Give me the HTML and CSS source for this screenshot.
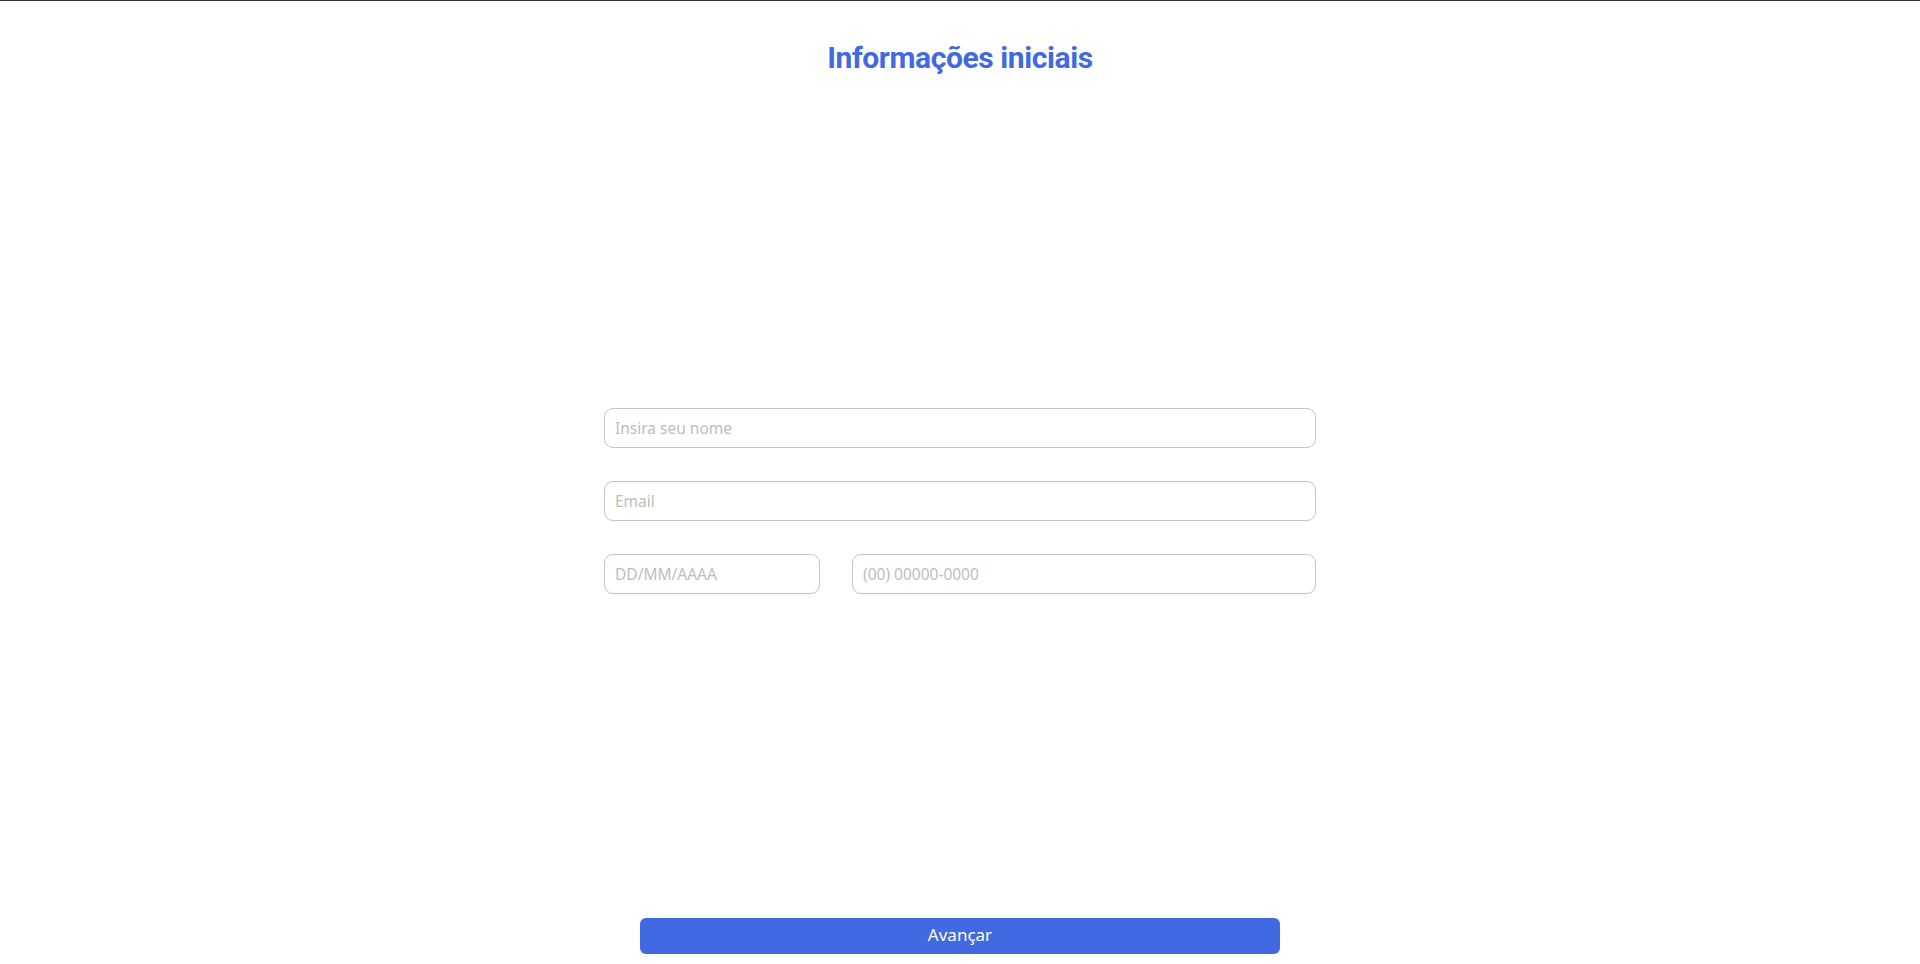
FILE: index.html
```html
<!DOCTYPE html>
<html lang="pt-BR">
<head>
<meta charset="utf-8">
<title>Informações iniciais</title>
<link rel="stylesheet" href="styles.css">
</head>
<body>
<div class="page">
  <h1 class="title">Informações iniciais</h1>
  <form class="form">
    <input class="field" type="text" placeholder="Insira seu nome">
    <input class="field" type="email" placeholder="Email">
    <div class="row">
      <input class="field field-date" type="text" placeholder="DD/MM/AAAA">
      <input class="field field-phone" type="text" placeholder="(00) 00000-0000">
    </div>
  </form>
  <div class="footer">
    <button class="btn" type="button">Avançar</button>
  </div>
</div>
</body>
</html>
```

FILE: styles.css
```css
* { box-sizing: border-box; }
html, body { margin: 0; padding: 0; }
body {
  background: #fff;
  font-family: "Noto Sans", "Open Sans", sans-serif;
  border-top: 1px solid #333;
}
.page {
  height: 963px;
  display: flex;
  flex-direction: column;
  align-items: center;
}
.title {
  margin: 39px 0 0;
  font-family: Roboto, "Liberation Sans", sans-serif;
  font-weight: 700;
  font-size: 30px;
  line-height: 36px;
  color: #4169e1;
  letter-spacing: -0.4px;
}
.form {
  margin-top: 332px;
  width: 712px;
  display: flex;
  flex-direction: column;
  gap: 33px;
}
.field {
  display: block;
  width: 100%;
  height: 40px;
  border: 1px solid #c4c4c4;
  border-radius: 9px;
  padding: 0 10px;
  font-family: inherit;
  font-size: 15.5px;
  color: #333;
  background: #fff;
  outline: none;
}
.field::placeholder { color: #bdbdbd; }
.row {
  display: flex;
  gap: 32px;
}
.field-date { width: 216px; flex: none; }
.field-phone { flex: 1; }
.footer {
  margin-top: auto;
  padding-bottom: 10px;
}
.btn {
  display: block;
  width: 640px;
  height: 36px;
  border: none;
  border-radius: 6px;
  background: #4169e1;
  color: #fff;
  font-family: inherit;
  font-size: 17px;
  line-height: 34px;
  padding: 0 0 2px;
  cursor: pointer;
}
```
